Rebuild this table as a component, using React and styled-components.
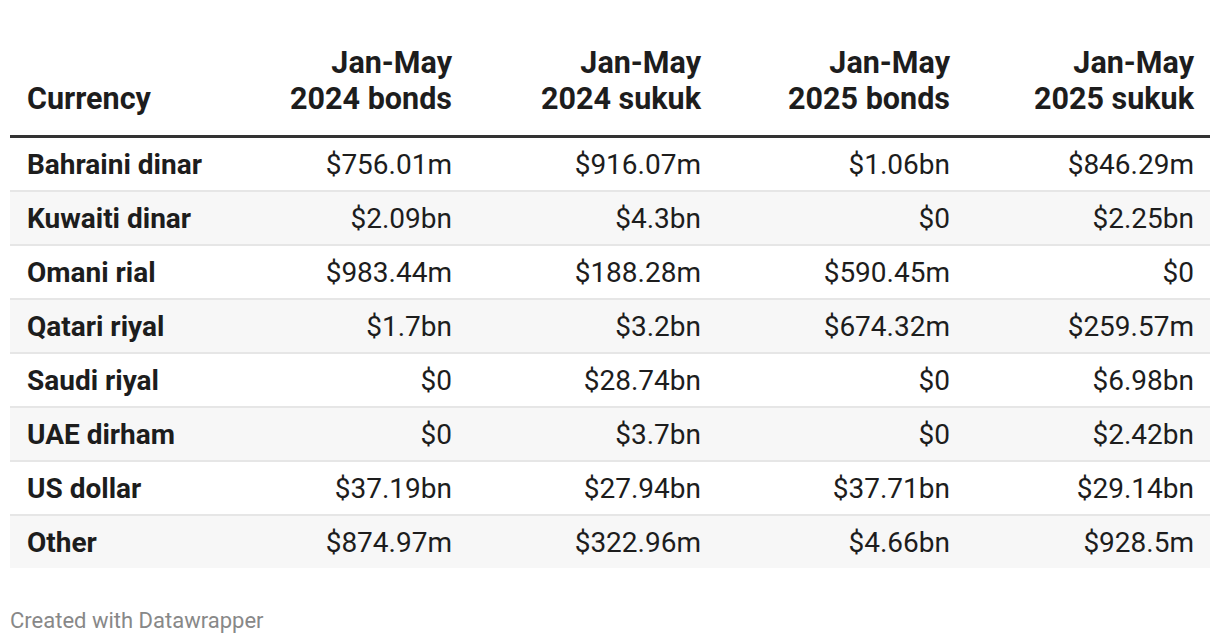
import React from "react";
import styled, { createGlobalStyle } from "styled-components";

const Global = createGlobalStyle`
  html, body { margin: 0; padding: 0; background: #fff; }
  body { font-family: Roboto, "Liberation Sans", Arial, sans-serif; color: #1d1d1d; }
`;

const Page = styled.div`
  padding: 38px 10px 0 10px;
  width: 1200px;
`;

const Table = styled.div`
  display: grid;
  grid-template-columns: 201px 249px 249px 249px 252px;
`;

const HeadCell = styled.div`
  display: flex;
  align-items: flex-end;
  justify-content: ${(p) => (p.$first ? "flex-start" : "flex-end")};
  text-align: ${(p) => (p.$first ? "left" : "right")};
  padding: 7px ${(p) => (p.$last ? "16px" : "8px")} 18px ${(p) => (p.$first ? "17px" : "8px")};
  font-size: 30.5px;
  font-weight: 700;
  line-height: 36px;
  color: #1d1d1d;
  white-space: nowrap;
  border-bottom: 3px solid #333;
`;

const Cell = styled.div`
  height: 52px;
  display: flex;
  align-items: center;
  justify-content: ${(p) => (p.$first ? "flex-start" : "flex-end")};
  padding: 0 ${(p) => (p.$last ? "16px" : "8px")} 0 ${(p) => (p.$first ? "17px" : "8px")};
  font-size: 28px;
  font-weight: ${(p) => (p.$first ? 700 : 400)};
  color: #1d1d1d;
  white-space: nowrap;
  background: ${(p) => (p.$shade ? "#f7f7f7" : "#fff")};
  border-bottom: ${(p) => (p.$end ? "none" : "2px solid #e6e6e6")};
`;

const Footer = styled.div`
  margin-top: 40px;
  font-size: 22px;
  line-height: 26px;
  color: #888;
`;

const headers = ["Currency", "Jan-May\n2024 bonds", "Jan-May\n2024 sukuk", "Jan-May\n2025 bonds", "Jan-May\n2025 sukuk"];

const rows = [
  ["Bahraini dinar", "$756.01m", "$916.07m", "$1.06bn", "$846.29m"],
  ["Kuwaiti dinar", "$2.09bn", "$4.3bn", "$0", "$2.25bn"],
  ["Omani rial", "$983.44m", "$188.28m", "$590.45m", "$0"],
  ["Qatari riyal", "$1.7bn", "$3.2bn", "$674.32m", "$259.57m"],
  ["Saudi riyal", "$0", "$28.74bn", "$0", "$6.98bn"],
  ["UAE dirham", "$0", "$3.7bn", "$0", "$2.42bn"],
  ["US dollar", "$37.19bn", "$27.94bn", "$37.71bn", "$29.14bn"],
  ["Other", "$874.97m", "$322.96m", "$4.66bn", "$928.5m"],
];

export default function App() {
  return (
    <>
      <Global />
      <Page>
        <Table>
          {headers.map((h, i) => (
            <HeadCell key={i} $first={i === 0} $last={i === headers.length - 1}>
              <span>
                {h.split("\n").map((l, j) => (
                  <React.Fragment key={j}>
                    {j > 0 && <br />}
                    {l}
                  </React.Fragment>
                ))}
              </span>
            </HeadCell>
          ))}
          {rows.map((r, ri) =>
            r.map((c, ci) => (
              <Cell
                key={`${ri}-${ci}`}
                $first={ci === 0}
                $last={ci === r.length - 1}
                $shade={ri % 2 === 1}
                $end={ri === rows.length - 1}
              >
                {c}
              </Cell>
            ))
          )}
        </Table>
        <Footer>Created with Datawrapper</Footer>
      </Page>
    </>
  );
}
